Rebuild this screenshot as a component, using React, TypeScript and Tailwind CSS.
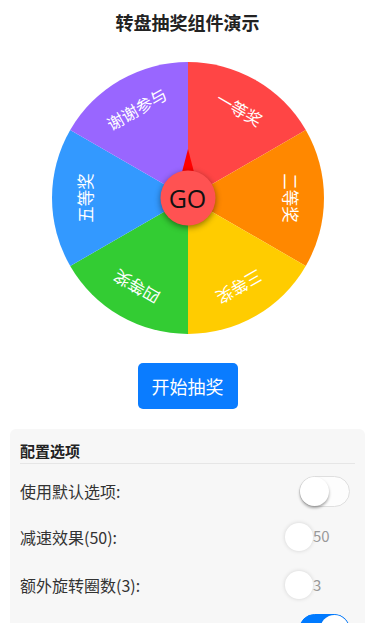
import { useState } from 'react'

interface Prize { name: string; color: string }

const prizes: Prize[] = [
  { name: '一等奖', color: '#ff4545' },
  { name: '二等奖', color: '#ff8800' },
  { name: '三等奖', color: '#ffcc00' },
  { name: '四等奖', color: '#33cc33' },
  { name: '五等奖', color: '#3399ff' },
  { name: '谢谢参与', color: '#9966ff' },
]

const R = 136
const C = 136

function slicePath(i: number, n: number) {
  const a0 = ((i * 360) / n - 90) * (Math.PI / 180)
  const a1 = (((i + 1) * 360) / n - 90) * (Math.PI / 180)
  const x0 = C + R * Math.cos(a0), y0 = C + R * Math.sin(a0)
  const x1 = C + R * Math.cos(a1), y1 = C + R * Math.sin(a1)
  return `M${C},${C} L${x0},${y0} A${R},${R} 0 0 1 ${x1},${y1} Z`
}

function Switch({ on, onChange }: { on: boolean; onChange: () => void }) {
  return (
    <button
      onClick={onChange}
      className={`relative w-[51px] h-[31px] rounded-full border ${on ? 'bg-[#007aff] border-[#007aff]' : 'bg-[#fdfdfd] border-[#dfdfdf]'}`}
    >
      <span className={`absolute top-0 w-[29px] h-[29px] rounded-full bg-white shadow-[0_2px_3px_rgba(0,0,0,0.35)] ${on ? 'right-0' : 'left-0'}`} />
    </button>
  )
}

function Knob({ value }: { value: number }) {
  return (
    <div className="flex items-center w-[65px]">
      <span className="w-[28px] h-[28px] rounded-full bg-white shadow-[0_0_4px_rgba(0,0,0,0.15)]" />
      <span className="text-[15px] text-[#999]">{value}</span>
    </div>
  )
}

export default function App() {
  const [useDefault, setUseDefault] = useState(false)
  const [fourth, setFourth] = useState(true)
  const n = prizes.length

  return (
    <div className="w-[375px] min-h-[623px] bg-white" style={{ fontFamily: '"Noto Sans CJK SC", "Noto Sans", sans-serif' }}>
      <div className="h-[44px] flex items-center justify-center text-[18px] font-bold text-[#222]">转盘抽奖组件演示</div>

      <div className="relative mx-auto mt-[18px] w-[272px] h-[272px]">
        <svg width="272" height="272" viewBox="0 0 272 272">
          {prizes.map((p, i) => (
            <path key={p.name} d={slicePath(i, n)} fill={p.color} />
          ))}
          {prizes.map((p, i) => (
            <text
              key={'t' + p.name}
              x={C}
              y={C - 103}
              transform={`rotate(${(i + 0.5) * (360 / n)} ${C} ${C})`}
              textAnchor="middle"
              dominantBaseline="central"
              fill="#fff"
              fontSize="16.5"
              fontFamily='"Noto Sans CJK SC", sans-serif'
            >
              {p.name}
            </text>
          ))}
          <polygon points={`${C},${C - 49} ${C - 7},${C - 22} ${C + 7},${C - 22}`} fill="#ff0000" />
        </svg>
        <button className="absolute left-1/2 top-1/2 -translate-x-1/2 -translate-y-1/2 w-[55px] h-[55px] rounded-full bg-[#ff5252] shadow-[0_2px_6px_rgba(0,0,0,0.45)] flex items-center justify-center text-[25px] text-[#111]" style={{ fontFamily: '"Open Sans", sans-serif' }}>
          GO
        </button>
      </div>

      <div className="flex justify-center mt-[29px]">
        <button className="w-[100px] h-[46px] rounded-[5px] bg-[#0a7cff] text-white text-[18px]">开始抽奖</button>
      </div>

      <div className="mx-[10px] mt-[20px] bg-[#f7f7f7] rounded-[6px] px-[10px] pt-[10px] pb-[10px]">
        <div className="h-[25px] leading-[24px] text-[15px] font-bold text-[#222] border-b border-[#e6e6e6]">配置选项</div>
        <div className="h-[44px] mt-[5px] flex items-center justify-between pr-[5px] text-[16px] text-[#333]">
          <span>使用默认选项:</span>
          <Switch on={useDefault} onChange={() => setUseDefault(!useDefault)} />
        </div>
        <div className="h-[47px] flex items-center justify-between pr-[5px] text-[16px] text-[#333]">
          <span>减速效果(50):</span>
          <Knob value={50} />
        </div>
        <div className="h-[50px] flex items-center justify-between pr-[5px] text-[16px] text-[#333]">
          <span>额外旋转圈数(3):</span>
          <Knob value={3} />
        </div>
        <div className="h-[48px] flex items-start justify-between pr-[5px] text-[16px] text-[#333]">
          <span className="pt-[14px]">启用音效:</span>
          <div className="pt-[4px]">
            <Switch on={fourth} onChange={() => setFourth(!fourth)} />
          </div>
        </div>
      </div>
    </div>
  )
}
